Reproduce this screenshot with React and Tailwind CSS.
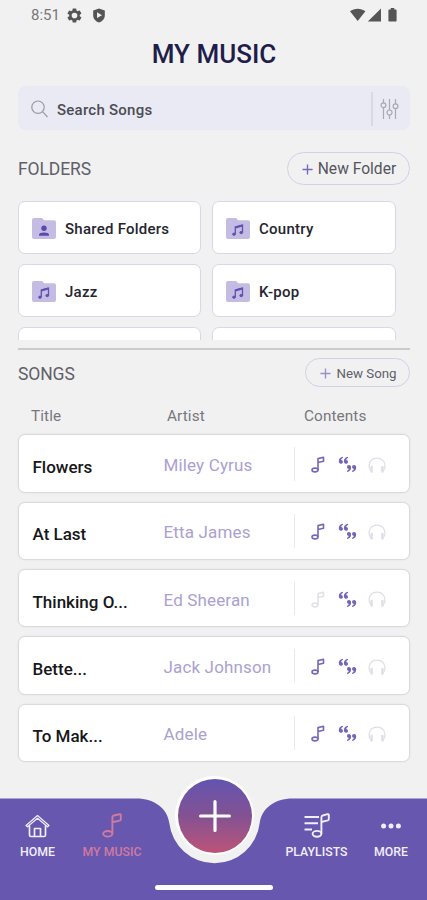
import clsx from "clsx";

const folders = [
  { name: "Shared Folders", shared: true },
  { name: "Country" },
  { name: "Jazz" },
  { name: "K-pop" },
];

const songs = [
  { title: "Flowers", artist: "Miley Cyrus", notes: true },
  { title: "At Last", artist: "Etta James", notes: true },
  { title: "Thinking O...", artist: "Ed Sheeran", notes: false },
  { title: "Bette...", artist: "Jack Johnson", notes: true },
  { title: "To Mak...", artist: "Adele", notes: true },
];

// ---- Icons ----
const NoteIcon = ({ className }) => (
  <svg viewBox="0 0 20 25" fill="none" stroke="currentColor" strokeWidth="1.900" strokeLinejoin="round" className={className}>
    <ellipse cx="5.800" cy="20.800" rx="4.600" ry="2.800" />
    <path d="M10.400 20.800V4.200Q10.400 2.800 11.800 2.500L17.600 1.200Q18.800 1 18.800 2.200V6.200Q18.800 7.300 17.700 7.600L10.400 9.300" />
  </svg>
);

const SmallNoteIcon = ({ className }) => (
  <svg viewBox="0 0 14 17" fill="none" stroke="currentColor" strokeWidth="1.600" strokeLinejoin="round" className={className}>
    <ellipse cx="4" cy="14" rx="3" ry="1.900" />
    <path d="M7 14V2.600L12.500 1.300V5.200L7 6.500" />
  </svg>
);

const QuotesIcon = () => (
  <svg viewBox="0 0 19 17" fill="currentColor" className="h-[17px] w-[19px] text-[#7466b6]">
    <path d="M4.900.8C2.300 1 .8 2.900.8 5.300.8 6.800 1.600 7.700 2.900 7.700c1.200 0 2-.8 2-1.800 0-1.100-.7-1.800-1.700-1.900.1-1 .7-1.700 1.700-2z" />
    <path d="M10 .8C7.400 1 5.900 2.900 5.900 5.300c0 1.500.8 2.400 2.100 2.400 1.200 0 2-.8 2-1.800 0-1.100-.7-1.800-1.700-1.900.1-1 .7-1.700 1.700-2z" />
    <path d="M9 16c2.600-.2 4.100-2.100 4.100-4.500 0-1.500-.8-2.400-2.100-2.400-1.200 0-2 .8-2 1.800 0 1.100.7 1.800 1.700 1.900-.1 1-.7 1.700-1.700 2z" />
    <path d="M14.100 16c2.600-.2 4.100-2.100 4.100-4.500 0-1.500-.8-2.400-2.100-2.400-1.200 0-2 .8-2 1.800 0 1.100.7 1.800 1.700 1.900-.1 1-.7 1.700-1.700 2z" />
  </svg>
);

const HeadphonesIcon = () => (
  <svg viewBox="0 0 18 16" fill="none" stroke="currentColor" className="h-4 w-[18px] text-[#e0dfe8]">
    <path d="M3.500 14.600C1.500 13 1 10.700 1 9 1 4.300 4.300 1.200 9 1.200s8 3.100 8 7.800c0 1.700-.5 4-2.500 5.600" strokeWidth="1.300" />
    <path d="M3.600 10v4.400M14.400 10v4.400" strokeWidth="2.500" strokeLinecap="round" />
  </svg>
);

const FolderIcon = ({ shared }) => (
  <svg viewBox="0 0 24 21" className="h-[21px] w-6 shrink-0">
    <path d="M2 0h7.200c.8 0 1.300.3 1.700.8l1.100 1.500H22a2 2 0 0 1 2 2V19a2 2 0 0 1-2 2H2a2 2 0 0 1-2-2V2a2 2 0 0 1 2-2z" fill="#c5bce3" />
    {shared ? (
      <g fill="#5c48ad">
        <circle cx="12" cy="10.300" r="2.700" />
        <path d="M7 17.800v-1c0-1.500 2.200-2.300 5-2.300s5 .8 5 2.300v1z" />
      </g>
    ) : (
      <g fill="none" stroke="#6350b1">
        <path d="M9.300 16V9L16.500 7v7.500" strokeWidth="1.300" />
        <path d="M9.300 9.500 16.500 7.500" strokeWidth="2" />
        <ellipse cx="8" cy="16.200" rx="1.400" ry="1.100" fill="#6350b1" />
        <ellipse cx="15.200" cy="14.600" rx="1.400" ry="1.100" fill="#6350b1" />
      </g>
    )}
  </svg>
);

const PlusIcon = ({ className }) => (
  <svg viewBox="0 0 12 12" fill="none" stroke="currentColor" strokeWidth="1.500" className={className}>
    <path d="M6 .5v11M.5 6h11" />
  </svg>
);

const StatusBar = () => (
  <div className="flex h-[30px] items-center pr-[29px] pl-[31px] text-[#555]">
    <span className="w-[29px] text-[15px] text-[#777]">8:51</span>
    <svg viewBox="0 0 24 24" fill="currentColor" className="ml-[6px] h-[17px] w-[17px]">
      <path fillRule="evenodd" d="M19.400 13c.1-.7.1-1.300 0-2l2.100-1.600a.5.5 0 0 0 .1-.7l-2-3.400a.5.5 0 0 0-.6-.2l-2.500 1a7.700 7.700 0 0 0-1.700-1l-.4-2.600a.5.5 0 0 0-.5-.5h-4a.5.5 0 0 0-.5.5L9 5.100c-.6.3-1.200.6-1.700 1l-2.500-1a.5.5 0 0 0-.6.2l-2 3.400a.5.5 0 0 0 .1.700L4.500 11v2l-2.200 1.600a.5.5 0 0 0-.1.700l2 3.400c.1.200.4.300.6.200l2.500-1c.5.400 1.100.7 1.700 1l.4 2.600c0 .3.200.5.5.5h4c.3 0 .5-.2.500-.5l.4-2.600c.6-.3 1.200-.6 1.700-1l2.500 1c.2.1.5 0 .6-.2l2-3.400a.5.5 0 0 0-.1-.7zM12 8a4 4 0 1 0 0 8 4 4 0 0 0 0-8z" />
    </svg>
    <svg viewBox="0 0 14 16" fill="currentColor" className="ml-[9px] h-[15px] w-[14px]">
      <path fillRule="evenodd" d="M7 .5 13.200 2.700v5c0 3.600-2.400 6.500-6.200 7.800C3.200 14.200.8 11.300.8 7.700v-5zM4.900 4.500v6.200L10.200 7.600z" />
    </svg>
    <svg viewBox="0 0 48 15" fill="currentColor" className="ml-auto h-[15px] w-12">
      <path d="M0 3.300C4.400-.1 11-.1 15.400 3.300L7.700 13zM31 .5V13.500H17.800zM40.700 1.500V.1h3.600V1.500h1.500q.8 0 .8.800v10.400q0 .8-.8.800h-6.600q-.8 0-.8-.8V2.300q0-.8.8-.8z" />
    </svg>
  </div>
);

const SearchBar = () => (
  <div className="mt-[14px] flex h-11 items-center rounded-lg bg-[#e9eaf3] pr-[11px] pl-[13px]">
    <svg viewBox="0 0 17 18" fill="none" stroke="#9a9aa5" strokeWidth="1.200" className="mt-[2px] h-[18px] w-[17px]">
      <circle cx="7" cy="7.200" r="6.200" />
      <path d="m11.500 11.700 5 5.300" />
    </svg>
    <span className="ml-[9px] pt-[4px] text-[15px] font-medium tracking-[0.25px] text-[#4c4c55]">Search Songs</span>
    <div className="mt-[2px] ml-auto h-[34px] w-[2px] bg-[#d9d9e2]" />
    <svg viewBox="0 0 19 20" fill="none" stroke="#a9a9b4" strokeWidth="1.200" className="mt-[2px] ml-[7px] h-5 w-[19px]">
      <path d="M3.500 0v4M3.500 8.500V20M9.500 0v11M9.500 16v4M15.500 0v5M15.500 9.500V20" />
      <circle cx="3.500" cy="6.200" r="2.400" />
      <circle cx="9.500" cy="13.500" r="2.500" />
      <circle cx="15.500" cy="7.200" r="2.400" />
    </svg>
  </div>
);

const SongRow = ({ song }) => (
  <div className="flex h-[58.500px] shrink-0 items-center rounded-[7px] border border-[#d9dadd] bg-white pl-[13.500px] shadow-[0_0_2px_#dfe1e4]">
    <span className="w-[131px] pt-[7px] text-[17px] leading-6 font-medium whitespace-nowrap text-[#17171a]">{song.title}</span>
    <span className="w-[130px] pt-[3px] text-[17px] leading-6 tracking-[0.150px] whitespace-nowrap text-[#aaa1d1]">{song.artist}</span>
    <div className="h-[34px] w-[1.500px] bg-[#e9e8ef]" />
    <div className="ml-[15.500px] flex items-center pt-[2px]">
      <SmallNoteIcon className={clsx("h-[17px] w-[14px]", song.notes ? "text-[#7668b8]" : "text-[#e2e1e9]")} />
      <div className="ml-[13px]"><QuotesIcon /></div>
      <div className="ml-[11px]"><HeadphonesIcon /></div>
    </div>
  </div>
);

const NavItem = ({ icon, label, className }) => (
  <div className={clsx("flex flex-col items-center", className)}>
    <div className="flex h-[25px] items-center">{icon}</div>
    <span className="mt-[6px] text-[12.300px] leading-4 font-medium whitespace-nowrap">{label}</span>
  </div>
);

const BottomNav = () => (
  <div className="relative h-[102px] shrink-0 text-[#f1effc]">
    <svg viewBox="0 0 427 102" className="absolute inset-0 h-full w-full">
      <path d="M0 .5H136C155 .5 167.500 11 169.300 25A45.500 45.500 0 0 0 259.700 25C261.500 11 274 .5 293 .5H427V102H0z" fill="#6757ae" />
    </svg>
    {/* Add button */}
    <div className="absolute -top-[22px] left-[175px] flex h-[79px] w-[79px] items-center justify-center rounded-full bg-white">
      <div className="flex h-[74px] w-[74px] items-center justify-center rounded-full bg-linear-to-b from-[#6354b0] via-[#835192] to-[#bd5277]">
        <svg viewBox="0 0 32 32" stroke="#fff" strokeWidth="3.200" strokeLinecap="round" className="h-8 w-8">
          <path d="M16 1.600v28.800M1.600 16h28.800" />
        </svg>
      </div>
    </div>
    <div className="relative flex pt-[15px]">
      <NavItem
        className="ml-[17px] w-[41px]"
        label="HOME"
        icon={
          <svg viewBox="0 0 25 24" fill="none" stroke="currentColor" strokeWidth="1.700" strokeLinejoin="round" strokeLinecap="round" className="h-6 w-[25px]">
            <path d="M1 11.500 12.500 1.500 24 11.500l-1.500 1.300-10-8.600-10 8.600z" strokeWidth="1.200" />
            <path d="M4.500 12v9q0 1.500 1.500 1.500h13q1.500 0 1.500-1.500v-9M9.500 22v-7.500h6V22" />
          </svg>
        }
      />
      <NavItem className="ml-[24px] w-[60px] text-[#d07aa0]" label="MY MUSIC" icon={<NoteIcon className="h-[25px] w-5" />} />
      <NavItem
        className="ml-[143px] w-[63px]"
        label="PLAYLISTS"
        icon={
          <svg viewBox="0 0 26 25" fill="none" stroke="currentColor" strokeWidth="1.900" strokeLinejoin="round" className="h-[25px] w-[26px]">
            <path d="M.5 4H15M.5 10.200H14M.5 16.500H8" />
            <ellipse cx="13" cy="20.800" rx="4.400" ry="2.900" />
            <path d="M17.400 20.800V4.200Q17.400 2.800 18.700 2.500L23.500 1.200Q24.800 1 24.800 2.200V5.900Q24.800 7 23.800 7.300L17.400 9" />
          </svg>
        }
      />
      <NavItem
        className="ml-[25px] w-[36px]"
        label="MORE"
        icon={
          <svg viewBox="0 0 20 6" fill="currentColor" className="h-[6px] w-5">
            <circle cx="2.600" cy="3" r="2.500" />
            <circle cx="10" cy="3" r="2.500" />
            <circle cx="17.400" cy="3" r="2.500" />
          </svg>
        }
      />
    </div>
    <div className="relative mx-auto mt-[25px] h-[5px] w-[118px] rounded-full bg-white" />
  </div>
);

const App = () => {
  return (
    <div className="flex h-[900px] w-[427px] flex-col overflow-hidden bg-[#f1f1f2] font-['Roboto',sans-serif]">
      <StatusBar />
      <div className="flex grow flex-col pr-[17px] pl-[18px]">
        <h1 className="mt-[6px] h-[36px] text-center text-[26px] leading-9 font-medium text-[#211d4a]">MY MUSIC</h1>
        <SearchBar />

        {/* Folders */}
        <div className="mt-[22px] flex h-[33px] items-center justify-between">
          <h2 className="pt-[2px] text-[17.500px] tracking-[-0.1px] text-[#606068]">FOLDERS</h2>
          <button className="flex h-[33px] w-[123px] items-center justify-center gap-[5px] rounded-full border border-[#d4cfe7] pt-[2px] pl-px text-[15.600px] whitespace-nowrap text-[#55555d]">
            <PlusIcon className="h-[11px] w-[11px] text-[#7768b8]" />
            New Folder
          </button>
        </div>
        <div className="mt-4 grid h-[139px] shrink-0 auto-rows-[53px] grid-cols-[183px_184px] gap-x-[11px] gap-y-[10px] overflow-hidden">
          {folders.map((folder) => (
            <div key={folder.name} className="flex items-center gap-[9px] rounded-[7px] border-[1.500px] border-[#d9d6e7] bg-white pt-[2px] pl-[13px]">
              <FolderIcon shared={folder.shared} />
              <span className="pt-[2px] text-[15px] font-medium tracking-[0.250px] whitespace-nowrap text-[#25252f]">{folder.name}</span>
            </div>
          ))}
          <div className="rounded-[7px] border border-[#d9d6e7] bg-white" />
          <div className="rounded-[7px] border border-[#d9d6e7] bg-white" />
        </div>
        <div className="mt-2 h-[2px] shrink-0 bg-[#cbcbcd]" />

        {/* Songs */}
        <div className="mt-[8px] flex h-[29px] items-center justify-between">
          <h2 className="pt-[3px] text-[17.500px] tracking-[-0.1px] text-[#606068]">SONGS</h2>
          <button className="flex h-[29px] w-[105px] items-center justify-center gap-[5px] rounded-full border border-[#d4cfe7] pt-[2px] pl-[2px] text-[13.300px] whitespace-nowrap text-[#606067]">
            <PlusIcon className="h-[11px] w-[11px] text-[#9b90c9]" />
            New Song
          </button>
        </div>
        <div className="mt-[17px] flex h-6 items-center pl-[13px] text-[15.300px] tracking-[0.1px] text-[#77777c]">
          <span className="w-[136px]">Title</span>
          <span className="w-[137px]">Artist</span>
          <span>Contents</span>
        </div>
        <div className="mt-[6.400px] flex flex-col gap-[8.800px]">
          {songs.map((song) => (
            <SongRow key={song.title} song={song} />
          ))}
        </div>
      </div>
      <BottomNav />
    </div>
  );
};

export default App;
